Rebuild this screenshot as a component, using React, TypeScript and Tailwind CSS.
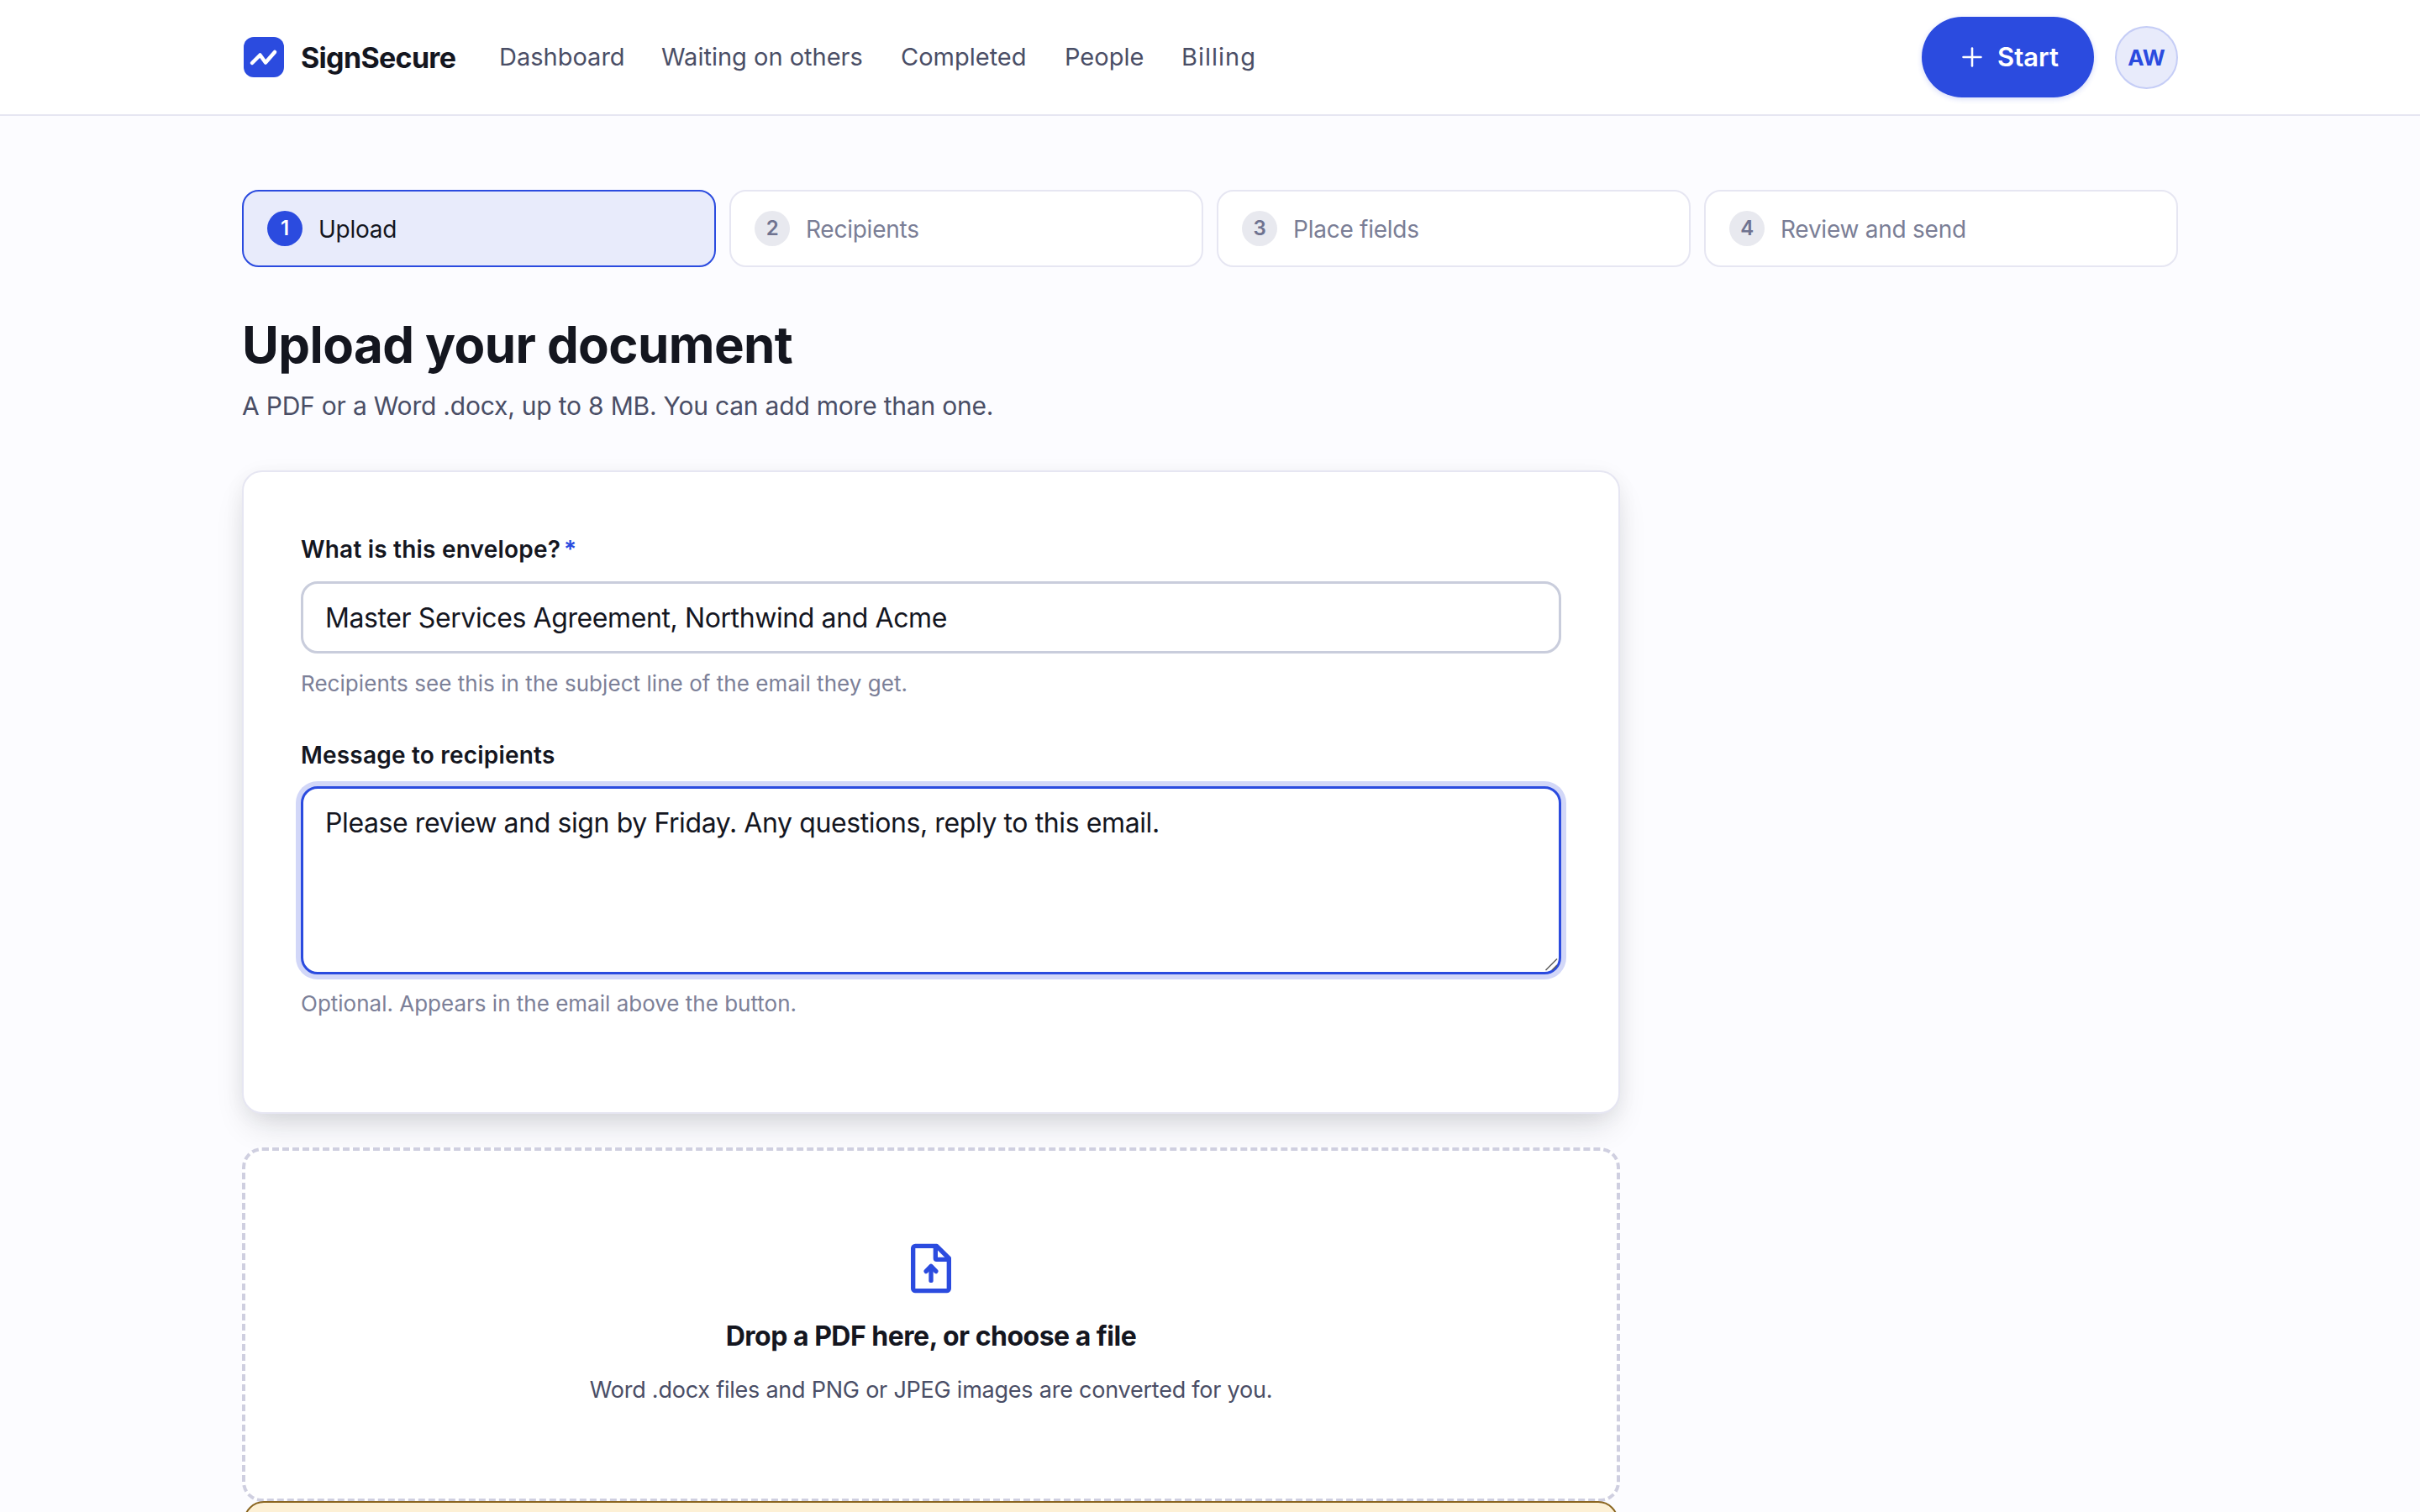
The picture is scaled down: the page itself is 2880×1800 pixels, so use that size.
import { Plus } from "lucide-react";

const navLinks = [
  { label: "Dashboard", w: "w-[149px]" },
  { label: "Waiting on others", w: "w-[241px]" },
  { label: "Completed", w: "w-[151px]" },
  { label: "People", w: "w-[95px]" },
  { label: "Billing", w: "w-[88px] tracking-[1px]" },
];

const steps = ["Upload", "Recipients", "Place fields", "Review and send"];

function Logo() {
  return (
    <svg width="48" height="48" viewBox="0 0 48 48" fill="none" className="shrink-0">
      <rect width="48" height="48" rx="12" fill="#2b4bdf" />
      <path d="M10 31 L19.5 21.5 L26 30.5 L37 18" stroke="#fff" strokeWidth="4.5" strokeLinecap="round" strokeLinejoin="round" />
    </svg>
  );
}

function FileUploadIcon() {
  return (
    <svg width="64" height="64" viewBox="0 0 24 24" fill="none" stroke="#2b4bdf" strokeWidth="2" strokeLinecap="round" strokeLinejoin="round">
      <path d="M14.5 2H5a1 1 0 0 0-1 1v18a1 1 0 0 0 1 1h14a1 1 0 0 0 1-1V7.5Z" />
      <path d="M14 2.2V7.5a.5.5 0 0 0 .5.5H20" />
      <path d="M12 11.2v6.2" />
      <path d="M9.8 13.3 12 11l2.2 2.3" />
    </svg>
  );
}

export default function App() {
  return (
    <div className="h-[1800px] overflow-hidden bg-[#fcfcff] font-['Inter',sans-serif] text-[#14161f]">
      <header className="h-[138px] border-b-2 border-[#e6e6f2] bg-white">
        <div className="mx-auto flex h-[136px] w-[2304px] items-center">
          <div className="ml-[2px]"><Logo /></div>
          <span className="ml-[20px] w-[236px] text-[34px] font-bold tracking-[-0.02em]">SignSecure</span>
          <nav className="flex gap-[44px] text-[29px] text-[#4a4e66]">
            {navLinks.map((l) => (
              <span key={l.label} className={`${l.w} whitespace-nowrap`}>{l.label}</span>
            ))}
          </nav>
          <button className="ml-auto flex h-[96px] w-[205px] items-center justify-center gap-[12px] rounded-full bg-[#2b4bdf] text-[31px] font-semibold text-white shadow-[0_2px_6px_rgba(43,75,223,0.2)]">
            <Plus size={36} strokeWidth={1.7} />
            Start
          </button>
          <div className="ml-[25px] flex h-[75px] w-[75px] items-center justify-center rounded-full border-2 border-[#c5cdf6] bg-[#e8ebfb] text-[26px] font-bold text-[#2b4bdf]">AW</div>
        </div>
      </header>

      <main className="mx-auto w-[2304px] pt-[88px]">
        <div className="grid grid-cols-4 gap-[16px]">
          {steps.map((s, i) => (
            <div
              key={s}
              className={
                i === 0
                  ? "flex h-[92px] items-center gap-[19px] rounded-[20px] border-2 border-[#2b4bdf] bg-[#e8ebfb] pl-[28px] text-[28px] tracking-[-0.25px] text-[#14161f]"
                  : "flex h-[92px] items-center gap-[19px] rounded-[20px] border-2 border-[#e6e6f2] bg-white pl-[28px] text-[28px] tracking-[-0.25px] text-[#7a7e96]"
              }
            >
              <span
                className={
                  i === 0
                    ? "flex h-[42px] w-[42px] items-center justify-center rounded-full bg-[#2b4bdf] text-[24px] font-semibold text-white"
                    : "flex h-[42px] w-[42px] items-center justify-center rounded-full bg-[#e8e9ef] text-[24px] font-semibold text-[#6f7390]"
                }
              >
                {i + 1}
              </span>
              <span className="pt-[2px]">{s}</span>
            </div>
          ))}
        </div>

        <h1 className="mt-[56px] text-[60px] leading-[72px] font-bold tracking-[-0.01em]">Upload your document</h1>
        <p className="mt-[16px] text-[30px] leading-[42px] tracking-[-0.21px] text-[#4a4e66]">A PDF or a Word .docx, up to 8 MB. You can add more than one.</p>

        <section className="mt-[56px] h-[766px] w-[1640px] rounded-[24px] border-2 border-[#e6e6f2] bg-white px-[68px] pt-[72px] shadow-[0_20px_40px_-10px_rgba(20,22,31,0.16),0_4px_24px_rgba(20,22,31,0.05)]">
          <label className="block text-[28px] leading-[40px] font-semibold tracking-[0.2px]">
            What is this envelope?<span className="ml-[4px] text-[#2b4bdf]">*</span>
          </label>
          <input
            defaultValue="Master Services Agreement, Northwind and Acme"
            className="mt-[18px] block h-[86px] w-full rounded-[20px] border-[3px] border-[#c9cddc] bg-white px-[26px] text-[32px] tracking-[-0.4px] text-[#14161f] outline-none"
          />
          <p className="mt-[18px] text-[26px] leading-[36px] tracking-[0.05px] text-[#7c8098]">Recipients see this in the subject line of the email they get.</p>

          <label className="mt-[47px] block text-[28px] leading-[40px] font-semibold tracking-[0.2px]">Message to recipients</label>
          <div className="relative mt-[17px]">
            <textarea
              defaultValue="Please review and sign by Friday. Any questions, reply to this email."
              className="block h-[224px] w-full resize-none rounded-[20px] border-[3px] border-[#2b4bdf] bg-white px-[26px] pt-[18px] text-[32px] leading-[46px] tracking-[-0.4px] text-[#14161f] shadow-[0_0_0_6px_#d2d7f8] outline-none"
            />
            <svg width="16" height="16" viewBox="0 0 16 16" fill="none" stroke="#5a5a5a" strokeWidth="1.4" className="absolute right-[3px] bottom-[3px]">
              <path d="M0.5 14 14 0.5" />
              <path d="M8 14 14 8" />
            </svg>
          </div>
          <p className="mt-[17px] text-[26px] leading-[36px] text-[#7c8098]">Optional. Appears in the email above the button.</p>
        </section>

        <section className="mt-[40px] flex h-[422px] w-[1640px] flex-col items-center rounded-[24px] border-4 border-dashed border-[#cfcfe0] bg-white pt-[108px]">
          <FileUploadIcon />
          <h2 className="mt-[29px] text-[32px] leading-[40px] font-bold tracking-[-0.5px]">Drop a PDF here, or choose a file</h2>
          <p className="mt-[26px] text-[27px] leading-[36px] tracking-[-0.23px] text-[#4a4e66]">Word .docx files and PNG or JPEG images are converted for you.</p>
        </section>

        <div className="-mt-[1px] ml-[2px] h-[100px] w-[1636px] rounded-[24px] border-2 border-[#8a6520] bg-[#fdf0d5]" />
      </main>
    </div>
  );
}
